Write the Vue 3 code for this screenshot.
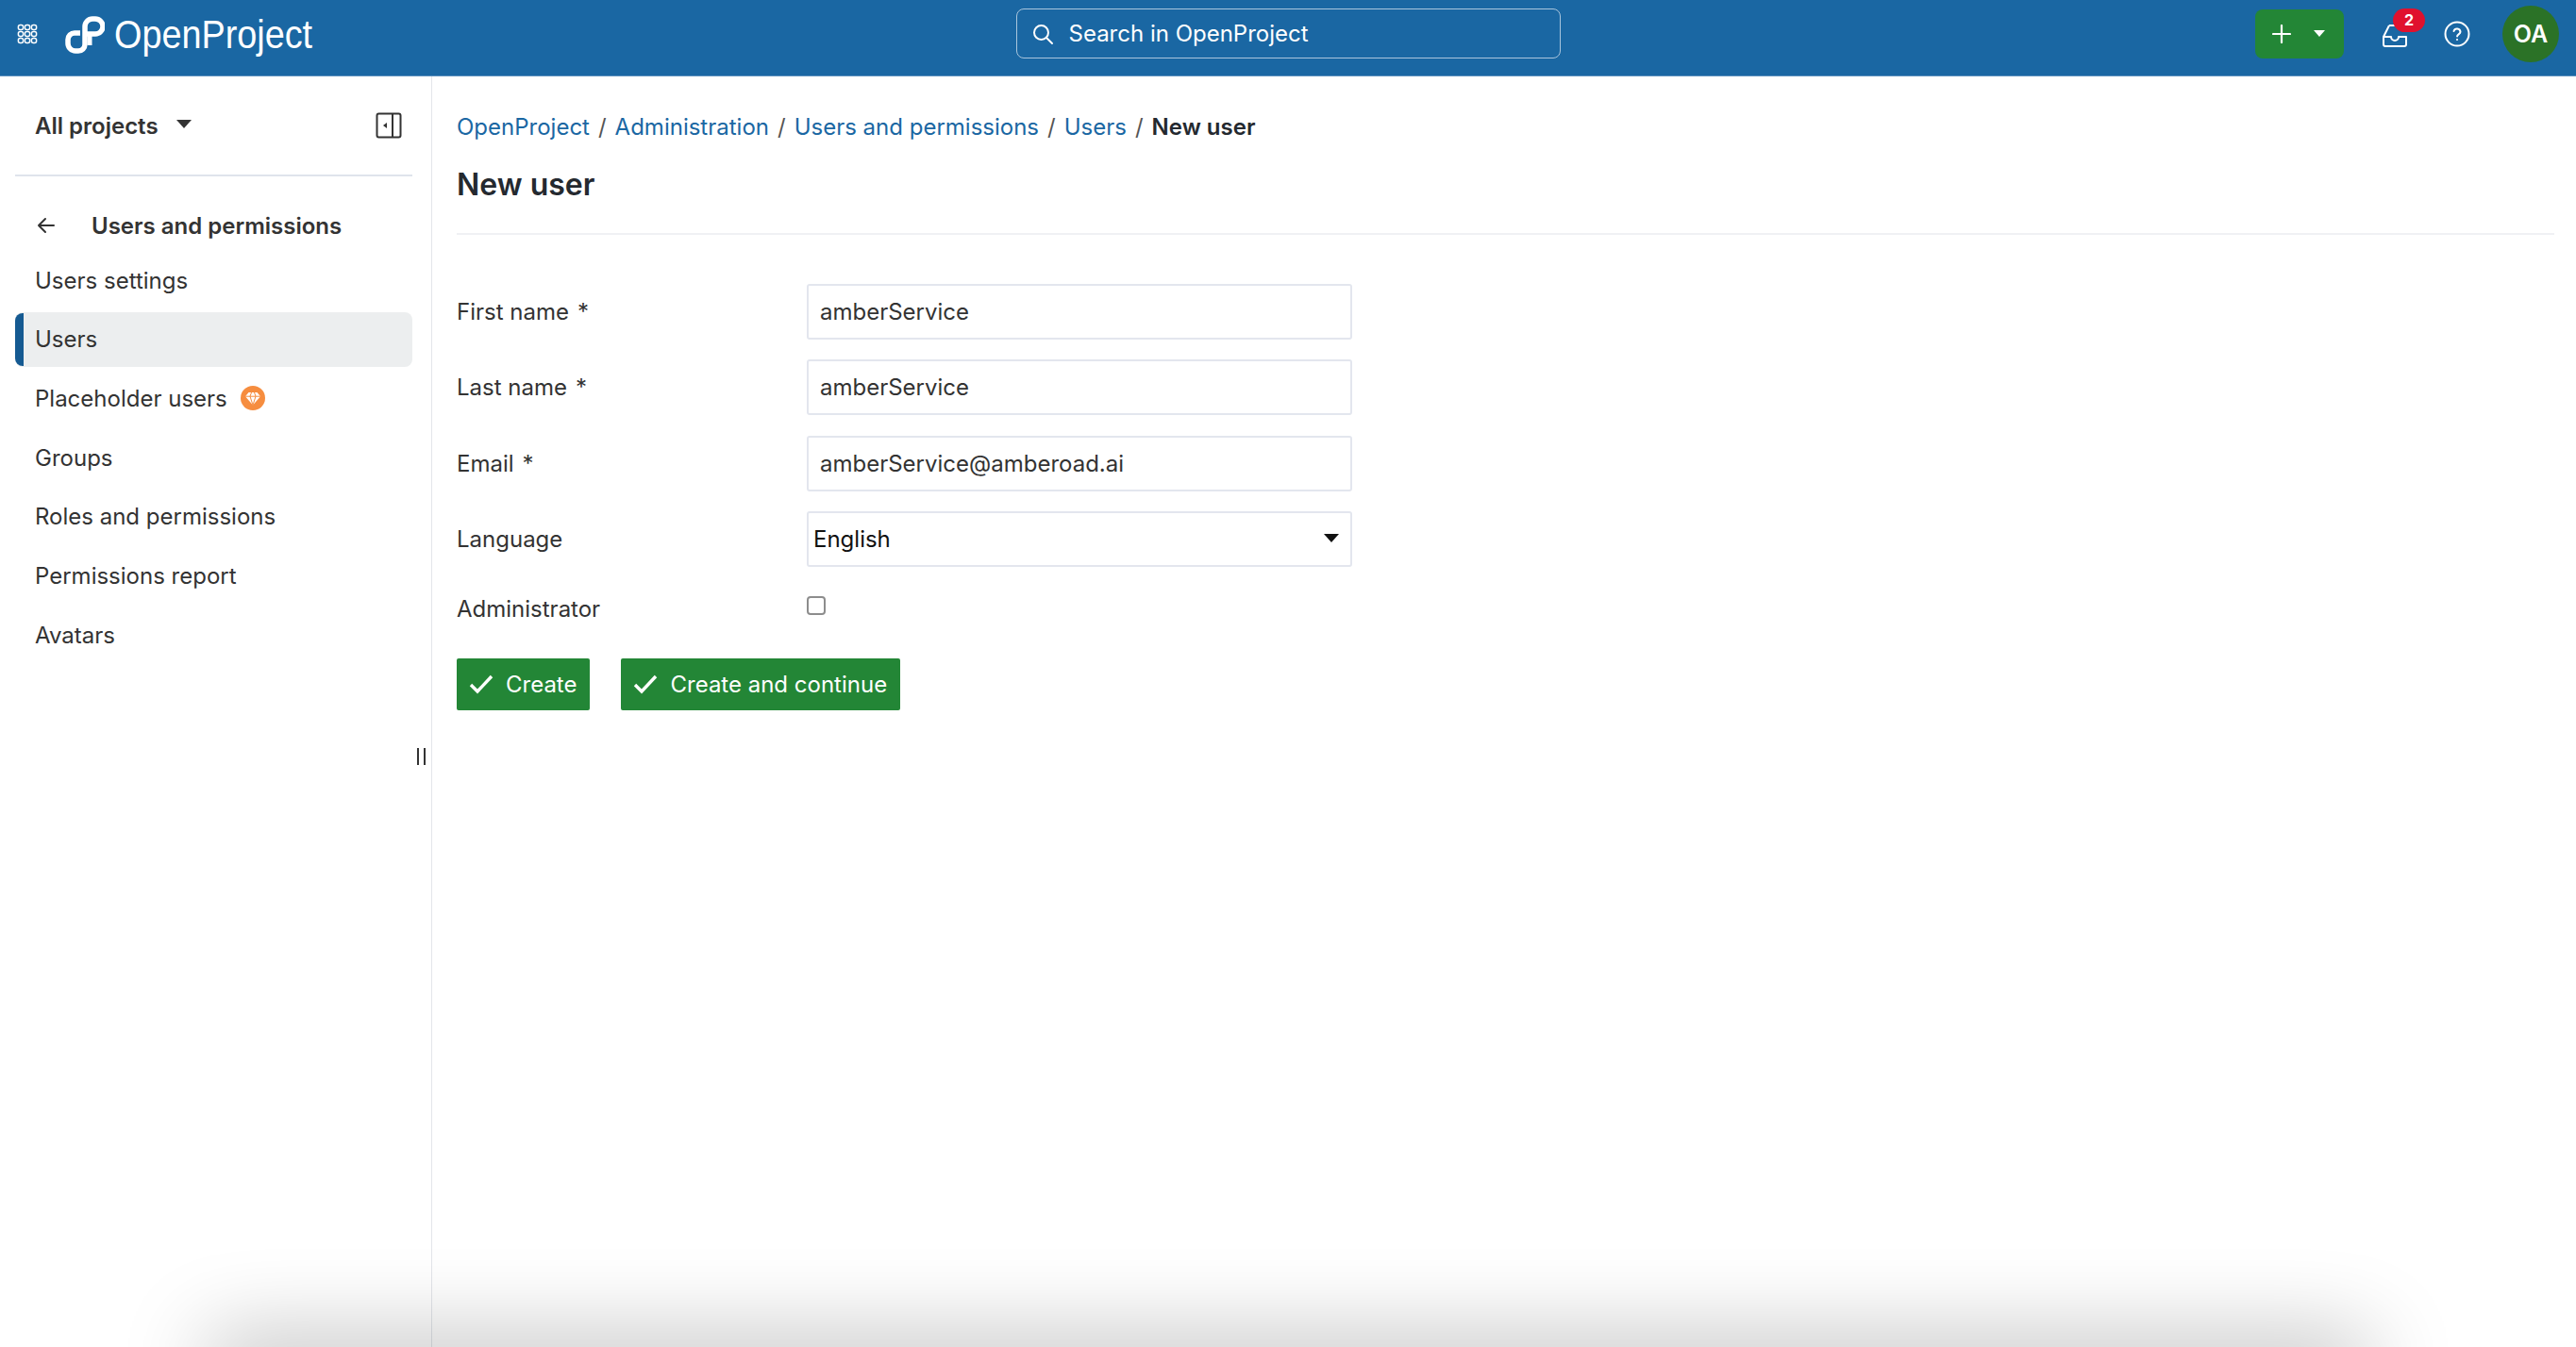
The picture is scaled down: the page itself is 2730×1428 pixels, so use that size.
<script setup>
const navItems = [
  { label: 'Users settings' },
  { label: 'Users', active: true },
  { label: 'Placeholder users', gem: true },
  { label: 'Groups' },
  { label: 'Roles and permissions' },
  { label: 'Permissions report' },
  { label: 'Avatars' },
]

const crumbs = ['OpenProject', 'Administration', 'Users and permissions', 'Users']

const fields = [
  { label: 'First name', value: 'amberService' },
  { label: 'Last name', value: 'amberService' },
  { label: 'Email', value: 'amberService@amberoad.ai' },
]

const gridDots = [5, 12, 19]
</script>

<template>
  <div class="page">
    <header class="topbar">
      <div class="top-left">
        <svg class="grid-icon" width="24" height="24" viewBox="0 0 24 24" fill="none" stroke="#fff" stroke-width="1.5">
          <template v-for="y in gridDots" :key="y">
            <rect v-for="x in gridDots" :key="x" :x="x - 2.6" :y="y - 2.6" width="5.2" height="5.2" rx="2" />
          </template>
        </svg>
        <svg class="logo-mark" width="42" height="40" viewBox="0 0 42 40" fill="none" stroke="#fff" stroke-width="5.5">
          <path d="M16 18H10a7 7 0 0 0-7 7v4a8 8 0 0 0 8 8h3a7 7 0 0 0 7-7V11a8 8 0 0 1 8-8h3a8 8 0 0 1 0 16H22" />
          <path d="M26 19v12" stroke-width="5" />
        </svg>
        <span class="logo-text">OpenProject</span>
      </div>
      <div class="search">
        <svg width="24" height="24" viewBox="0 0 24 24" fill="none" stroke="#fff" stroke-width="2">
          <circle cx="10.5" cy="10.5" r="7.5" />
          <path d="M16 16l6 6" stroke-linecap="round" />
        </svg>
        <span>Search in OpenProject</span>
      </div>
      <div class="top-right">
        <div class="add-btn">
          <svg width="20" height="20" viewBox="0 0 20 20" stroke="#fff" stroke-width="2.2" stroke-linecap="round">
            <path d="M10 1v18M1 10h18" />
          </svg>
          <span class="caret caret-white"></span>
        </div>
        <div class="inbox">
          <svg width="28" height="26" viewBox="0 0 28 26" fill="none" stroke="#fff" stroke-width="2" stroke-linejoin="round">
            <path d="M8 2h12M8 2L2 14v8a2 2 0 0 0 2 2h20a2 2 0 0 0 2-2v-8h-8a4 4 0 0 1-8 0H2" />
          </svg>
          <span class="badge">2</span>
        </div>
        <svg class="help" width="28" height="28" viewBox="0 0 28 28" fill="none" stroke="#fff" stroke-width="2">
          <circle cx="14" cy="14" r="12.5" />
          <path d="M10.5 11a3.6 3.6 0 0 1 7 .8c0 2.4-3.4 2.7-3.4 4.6" stroke-linecap="round" />
          <circle cx="14" cy="20" r="1.1" fill="#fff" stroke="none" />
        </svg>
        <div class="avatar">OA</div>
      </div>
    </header>

    <div class="body">
      <aside class="sidebar">
        <div class="project-row">
          <span class="project-name">All projects</span>
          <span class="caret caret-dark"></span>
          <svg class="collapse" width="28" height="28" viewBox="0 0 28 28" fill="none" stroke="#333" stroke-width="2">
            <rect x="1.5" y="1.5" width="25" height="25" rx="2" />
            <path d="M18 1.5v25" />
            <path d="M12 11v6l-4-3z" fill="#333" stroke="none" />
          </svg>
        </div>
        <div class="side-title">
          <svg width="20" height="18" viewBox="0 0 20 18" fill="none" stroke="#333" stroke-width="2" stroke-linecap="round" stroke-linejoin="round">
            <path d="M18 9H2M9 2L2 9l7 7" />
          </svg>
          <span>Users and permissions</span>
        </div>
        <nav class="nav">
          <div v-for="item in navItems" :key="item.label" :class="['nav-item', item.active && 'nav-item--active']">
            <span>{{ item.label }}</span>
            <svg v-if="item.gem" class="gem" width="26" height="26" viewBox="0 0 26 26">
              <circle cx="13" cy="13" r="13" fill="#f68d3f" />
              <path d="M8.5 7h9l3.5 4.2L13 20.5 5 11.2z" fill="#fff" />
              <path d="M5 11.2h16M10 11.2l3 9.3 3-9.3M10 11.2L11.5 7M16 11.2L14.5 7" stroke="#f68d3f" stroke-width="1" fill="none" />
            </svg>
          </div>
        </nav>
        <div class="resizer"></div>
      </aside>

      <main class="content">
        <div class="breadcrumb">
          <template v-for="c in crumbs" :key="c">
            <a class="crumb">{{ c }}</a>
            <span class="sep">/</span>
          </template>
          <strong class="crumb-current">New user</strong>
        </div>
        <h1 class="title">New user</h1>

        <form class="form">
          <div v-for="f in fields" :key="f.label" class="row">
            <label class="label">{{ f.label }}<span class="req">*</span></label>
            <input class="input" type="text" :value="f.value" />
          </div>
          <div class="row">
            <label class="label">Language</label>
            <div class="select">
              <span>English</span>
              <span class="caret caret-black"></span>
            </div>
          </div>
          <div class="row row--check">
            <label class="label">Administrator</label>
            <input class="check" type="checkbox" />
          </div>
          <div class="actions">
            <button type="button" class="btn">
              <svg width="26" height="22" viewBox="0 0 26 22" fill="none" stroke="#fff" stroke-width="3.4">
                <path d="M2 12l7 7L24 3" />
              </svg>
              Create
            </button>
            <button type="button" class="btn">
              <svg width="26" height="22" viewBox="0 0 26 22" fill="none" stroke="#fff" stroke-width="3.4">
                <path d="M2 12l7 7L24 3" />
              </svg>
              Create and continue
            </button>
          </div>
        </form>
      </main>
    </div>

    <!-- dock shadow along the window's lower edge -->
    <div class="edge-shadow"></div>
  </div>
</template>

<style>
html, body {
  margin: 0;
  background: #fff;
  overflow: hidden;
}
</style>

<style scoped>
.page {
  position: relative;
  width: 2730px;
  height: 1428px;
  overflow: hidden;
  display: flex;
  flex-direction: column;
  font-family: Inter, "Liberation Sans", sans-serif;
  font-size: 24px;
  color: #333;
  background: #fff;
}

/* Header */
.topbar {
  height: 80px;
  flex-shrink: 0;
  background: #1a67a3;
  border-bottom: 1px solid #5b8fbd;
  display: grid;
  grid-template-columns: 1fr 578px 1fr;
  align-items: center;
  column-gap: 0;
  padding: 0 0 0 17px;
  padding-right: 18px;
}

.top-left {
  display: flex;
  align-items: center;
}

.grid-icon {
  margin-right: 28px;
  margin-top: -9px;
}

.logo-mark {
  margin-top: -7px;
}

.logo-text {
  color: #fff;
  font-family: "Liberation Sans Narrow", "Liberation Sans", sans-serif;
  font-size: 42px;
  margin-left: 10px;
  margin-top: -7px;
  line-height: 1;
  display: inline-block;
  transform: scaleX(0.9);
  transform-origin: left center;
}

.search {
  margin-left: 1px;
  margin-top: -9px;
  height: 53px;
  box-sizing: border-box;
  border: 1.5px solid #a9c5dd;
  border-radius: 8px;
  display: flex;
  align-items: center;
  gap: 16px;
  padding-left: 15px;
  color: #fff;
  font-size: 24px;
}

.top-right {
  display: flex;
  align-items: center;
  justify-content: flex-end;
  margin-top: -9px;
}

.add-btn {
  width: 94px;
  height: 52px;
  background: #238636;
  border-radius: 8px;
  display: flex;
  align-items: center;
  gap: 24px;
  padding-left: 18px;
  box-sizing: border-box;
  margin-right: 40px;
}

.caret {
  display: inline-block;
  width: 0;
  height: 0;
  border-left: 7px solid transparent;
  border-right: 7px solid transparent;
}

.caret-white {
  border-left-width: 6px;
  border-right-width: 6px;
  border-top: 7px solid #fff;
}

.inbox {
  position: relative;
  width: 28px;
  height: 26px;
  margin-right: 38px;
  margin-top: 4px;
}

.inbox svg {
  display: block;
}

.badge {
  position: absolute;
  left: 12px;
  top: -16px;
  width: 34px;
  height: 25px;
  border-radius: 13px;
  background: #e0112e;
  color: #fff;
  font-size: 16px;
  font-weight: 700;
  display: flex;
  align-items: center;
  justify-content: center;
}

.help {
  margin-right: 34px;
}

.avatar {
  width: 60px;
  height: 60px;
  border-radius: 50%;
  background: #2b7227;
  color: #fff;
  font-size: 25px;
  font-weight: 600;
  display: flex;
  align-items: center;
  justify-content: center;
}

/* Layout */
.body {
  flex: 1;
  display: flex;
  min-height: 0;
}

.sidebar {
  position: relative;
  width: 458px;
  flex-shrink: 0;
  box-sizing: border-box;
  border-right: 1px solid #e3e6ea;
  padding: 0 20px 0 16px;
}

.project-row {
  height: 106px;
  box-sizing: border-box;
  border-bottom: 2px solid #dfe4ec;
  display: flex;
  align-items: center;
  padding: 0 11px 0 21px;
}

.project-name {
  font-weight: 600;
  color: #333;
}

.caret-dark {
  border-left-width: 8px;
  border-right-width: 8px;
  border-top: 9px solid #333;
  margin-left: 19px;
  margin-top: -4px;
}

.collapse {
  margin-left: auto;
}

.side-title {
  height: 58px;
  margin-top: 23px;
  display: flex;
  align-items: center;
  gap: 38px;
  padding-left: 23px;
  font-weight: 600;
}

.nav {
  display: flex;
  flex-direction: column;
  gap: 4.7px;
}

.nav-item {
  position: relative;
  height: 58px;
  display: flex;
  align-items: center;
  gap: 14px;
  padding-left: 21px;
  border-radius: 8px;
  color: #333;
}

.nav-item--active {
  background: #eceeef;
}

.nav-item--active::before {
  content: "";
  position: absolute;
  left: 0;
  top: 1px;
  bottom: 1px;
  width: 9px;
  background: #155a92;
  border-radius: 8px 0 0 8px;
}

.resizer {
  position: absolute;
  right: 6px;
  top: 712px;
  width: 9px;
  height: 18px;
  border-left: 2.5px solid #333;
  border-right: 2.5px solid #333;
  box-sizing: border-box;
}

/* Content */
.content {
  flex: 1;
  padding: 0 23px 0 26px;
  min-width: 0;
}

.breadcrumb {
  height: 24px;
  margin-top: 41px;
  display: flex;
  align-items: center;
  gap: 9px;
  white-space: nowrap;
}

.crumb {
  color: #1a67a3;
}

.sep {
  color: #555;
}

.crumb-current {
  font-weight: 600;
  color: #24292f;
}

.title {
  margin: 30px 0 0;
  font-size: 32px;
  font-weight: 600;
  line-height: 40px;
  color: #24292f;
  padding-bottom: 31px;
  border-bottom: 2px solid #f0f1f4;
}

.form {
  margin-top: 52px;
}

.row {
  display: grid;
  grid-template-columns: 371px 578px;
  align-items: center;
  height: 59px;
  margin-bottom: 21.4px;
}

.label {
  color: #333;
}

.req {
  margin-left: 9px;
}

.input {
  box-sizing: border-box;
  height: 59px;
  width: 578px;
  border: 2px solid #e3e6ee;
  border-radius: 3px;
  padding: 0 12px;
  font: inherit;
  color: #333;
  outline: none;
  background: #fff;
}

.select {
  box-sizing: border-box;
  height: 59px;
  border: 2px solid #e3e6ee;
  border-radius: 3px;
  display: flex;
  align-items: center;
  justify-content: space-between;
  padding: 0 12px 0 5px;
  color: #111;
}

.caret-black {
  border-left-width: 8px;
  border-right-width: 8px;
  border-top: 9px solid #111;
  margin-top: -2px;
}

.row--check {
  height: 46px;
  margin-top: 0;
  margin-bottom: 0;
}

.check {
  appearance: none;
  margin: -8px 0 0;
  width: 20px;
  height: 20px;
  box-sizing: border-box;
  border: 2px solid #8d8d8d;
  border-radius: 4px;
  background: #fff;
}

.actions {
  display: flex;
  gap: 33px;
  margin-top: 29px;
}

.btn {
  height: 55px;
  display: flex;
  align-items: center;
  gap: 13px;
  padding: 0 14px 0 13px;
  border: none;
  border-radius: 2px;
  background: #238636;
  color: #fff;
  font: inherit;
}

.edge-shadow {
  position: absolute;
  left: 230px;
  right: 230px;
  bottom: -40px;
  height: 40px;
  box-shadow: 0 0 90px 10px rgba(0, 0, 0, 0.28);
  pointer-events: none;
}
</style>
